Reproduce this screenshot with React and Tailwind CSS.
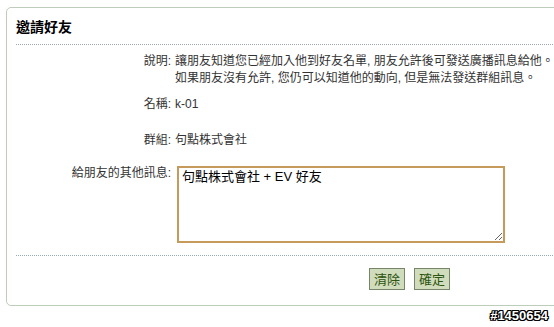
const font = { fontFamily: '"Liberation Sans", "Noto Sans CJK TC", sans-serif' };

const Row = ({ label, children, className }) => (
  <div className={"flex " + (className || "")}>
    <div className="w-[157px] shrink-0 text-right pr-[2px]">{label}:</div>
    <div className="pl-[2px]">{children}</div>
  </div>
);

export default function App() {
  return (
    <div
      className="w-[554px] h-[327px] bg-white relative overflow-hidden text-[12px] leading-[17px] text-[#333]"
      style={font}
    >
      <div className="ml-[6px] mt-[7px] w-[640px] h-[299px] border border-[#bccdb9] rounded-[5px] pl-[9px]">
        <div className="h-[37px] flex items-center pt-[3px] border-b border-dotted border-[#9aa8b0]">
          <h1 className="text-[14px] font-bold text-black">邀請好友</h1>
        </div>

        <Row label="說明" className="mt-[8px]">
          <p>讓朋友知道您已經加入他到好友名單, 朋友允許後可發送廣播訊息給他。</p>
          <p>如果朋友沒有允許, 您仍可以知道他的動向, 但是無法發送群組訊息。</p>
        </Row>
        <Row label="名稱" className="mt-[9px]">
          k-01
        </Row>
        <Row label="群組" className="mt-[19px]">
          句點株式會社
        </Row>
        <Row label="給朋友的其他訊息" className="mt-[16px] h-[90px]">
          <textarea
            className="ml-[2px] mt-[1px] w-[328px] h-[77px] border-2 border-[#c59a5a] outline-none resize px-[3px] py-0 text-[13px] leading-[17px] text-black"
            style={font}
            defaultValue="句點株式會社 + EV 好友"
          />
        </Row>

        <div className="border-b border-dotted border-[#9aa8b0]" />

        <div className="flex gap-[9px] pl-[353px] mt-[12px]">
          <button className="h-[22px] px-[4px] bg-[#d0dcbc] border border-[#76866a] text-[13px] text-[#2e5510] leading-none">
            清除
          </button>
          <button className="h-[22px] px-[4px] bg-[#d0dcbc] border border-[#76866a] text-[13px] text-[#2e5510] leading-none">
            確定
          </button>
        </div>
      </div>

      <div
        className="absolute right-[6px] bottom-[3px] text-[13px] font-bold text-white"
        style={{
          textShadow:
            "1px 0 0 #000, -1px 0 0 #000, 0 1px 0 #000, 0 -1px 0 #000, 1px 1px 0 #000, -1px -1px 0 #000, 1px -1px 0 #000, -1px 1px 0 #000",
        }}
      >
        #1450654
      </div>
    </div>
  );
}
